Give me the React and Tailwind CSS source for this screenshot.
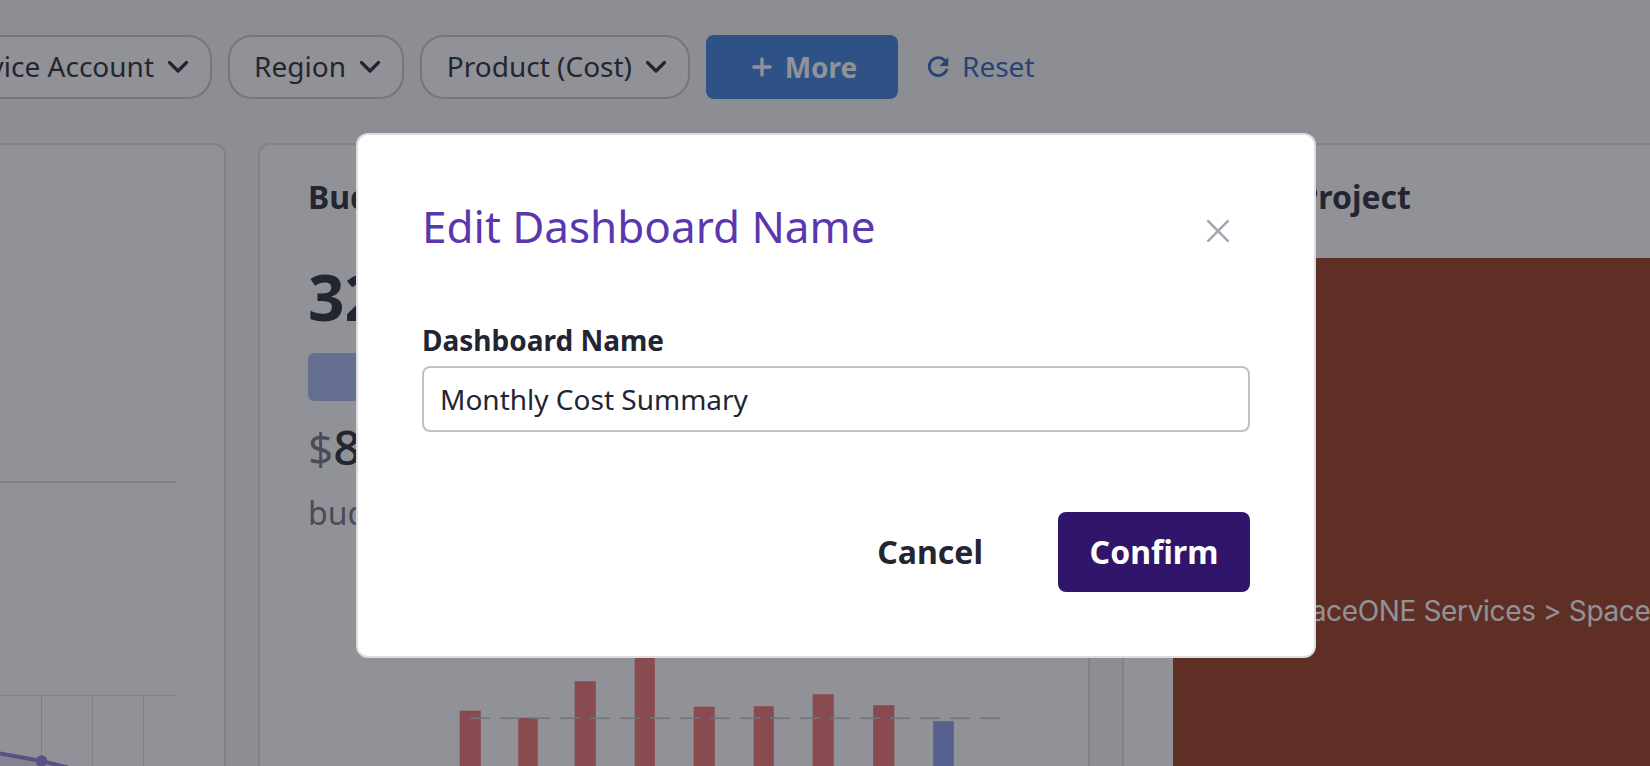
import React from "react";

const bars = [
  { x: 460, y: 711, w: 20.5, c: "#ef7070" },
  { x: 518.5, y: 718, w: 19, c: "#ef7070" },
  { x: 575, y: 681.5, w: 20.5, c: "#ef7070" },
  { x: 635, y: 650, w: 19.5, c: "#ef7070" },
  { x: 694, y: 707, w: 20.5, c: "#ef7070" },
  { x: 754, y: 706.5, w: 19.5, c: "#ef7070" },
  { x: 813, y: 694.5, w: 20.5, c: "#ef7070" },
  { x: 873.5, y: 705.5, w: 20.5, c: "#ef7070" },
  { x: 933.5, y: 721.5, w: 20, c: "#879ae8" },
];

function Chevron() {
  return (
    <svg className="mt-0.5 h-6 w-6 shrink-0" viewBox="0 0 24 24" fill="none" stroke="#232533" strokeWidth="3.2" strokeLinecap="round" strokeLinejoin="round">
      <path d="M3.5 7.5 L12 16 L20.5 7.5" />
    </svg>
  );
}

function Filter({ label, className }) {
  return (
    <div className={"flex h-16 shrink-0 items-center justify-end gap-3 rounded-[24px] border-2 border-[#c5c6cd] bg-white pr-5 pb-0.5 " + className}>
      <span className="whitespace-nowrap">{label}</span>
      <Chevron />
    </div>
  );
}

function SpendChart() {
  return (
    <svg className="mt-[209px] block h-[76px] w-[176px]" viewBox="0 692 176 76">
      <path d="M0 753.5 L41.5 761 L68 768 L0 768 Z" fill="#6b5fc0" fillOpacity="0.2" />
      <path d="M0 695.5 H176 M41.5 695 V768 M92.5 695 V768 M143.5 695 V768" stroke="#dddfe3" fill="none" />
      <path d="M0 753.5 L41.5 761 L68 767.5" stroke="#8b7fd3" strokeWidth="4" fill="none" />
      <circle cx="41.5" cy="761" r="5.8" fill="#8b7fd3" />
    </svg>
  );
}

function BudgetChart() {
  return (
    <svg className="mt-auto block h-[120px] w-[734px]" viewBox="308 646 734 120">
      {bars.map((b) => (
        <rect key={b.x} x={b.x} y={b.y} width={b.w} height={770 - b.y} fill={b.c} stroke={b.c} strokeOpacity="0.6" />
      ))}
      <path d="M470 718.2 H1001" stroke="#bfc1c8" strokeWidth="1.4" strokeDasharray="20 10" />
    </svg>
  );
}

function Dashboard() {
  return (
    <div className="flex h-full flex-col bg-[#f7f7f7]">
      <div className="flex h-[143px] shrink-0 items-start gap-4 pt-[35px] text-[28px] leading-10">
        <Filter label="Service Account" className="-ml-[88px] w-[300px]" />
        <Filter label="Region" className="w-[176px]" />
        <Filter label="Product (Cost)" className="w-[270px]" />
        <button className="flex h-16 w-48 shrink-0 items-center justify-center gap-[13px] rounded-lg bg-[#397edb] pl-[5px] font-bold text-white">
          <svg className="h-5 w-5" viewBox="0 0 20 20" stroke="currentColor" strokeWidth="3.3" strokeLinecap="round">
            <path d="M10 1.9V18.1M1.9 10H18.1" />
          </svg>
          More
        </button>
        <div className="ml-[13px] flex h-16 items-center gap-[13px] pb-0.5 text-[#2b63b9]">
          <svg className="mt-0.5 h-[22px] w-[22px]" viewBox="0 0 22 22">
            <path d="M18.2 4.8 A9 9 0 1 0 19.6 14" fill="none" stroke="currentColor" strokeWidth="2.8" strokeLinecap="round" />
            <path d="M21.3 1.2 V10 H12.4 Z" fill="currentColor" />
          </svg>
          Reset
        </div>
      </div>

      <div className="flex min-h-0 flex-1 gap-8">
        <section className="h-[660px] w-[226px] shrink-0 rounded-tr-xl border-2 border-l-0 border-[#dddfe3] bg-white">
          <div className="mt-[336px] h-0.5 w-44 bg-[#dddfe3]" />
          <SpendChart />
        </section>

        <section className="flex h-[623px] w-[832px] shrink-0 flex-col rounded-t-xl border-2 border-b-0 border-[#dddfe3] bg-white px-12">
          <h2 className="mt-[32px] text-[32px] leading-10 font-bold">Budget Usage</h2>
          <div className="mt-[40px] text-[64px] leading-[80px] font-bold">32.5%</div>
          <div className="mt-[16px] h-12 w-full rounded-md bg-[#a7bbf0]" />
          <div className="mt-[16px] h-[60px] text-[48px] leading-[60px] font-medium">
            <span className="text-[44px] font-normal text-[#6f7185]">$</span>846,230
          </div>
          <div className="mt-[14px] text-[32px] leading-[44px] text-[#6f7185]">budget used</div>
          <BudgetChart />
        </section>

        <section className="h-[660px] w-[700px] shrink-0 rounded-tl-xl border-2 border-[#dddfe3] bg-white pl-[49px]">
          <h2 className="mt-[32px] w-[238px] text-right text-[32px] leading-10 font-bold whitespace-nowrap">Cost by Project</h2>
          <div className="mt-[41px] flex h-[520px] w-[640px] items-start bg-[#9b371b] pt-[335px] pl-[103px]">
            <span className="font-['Inter'] text-[28px] leading-9 tracking-[-0.35px] whitespace-nowrap text-white">SpaceONE Services &gt; SpaceONE</span>
          </div>
        </section>
      </div>
    </div>
  );
}

export default function App() {
  return (
    <main className="relative h-[766px] w-[1650px] overflow-hidden font-['Noto_Sans',sans-serif] text-[#232533]">
      <Dashboard />
      <div className="absolute inset-0 flex items-start bg-[#232530]/50 pt-[133px] pl-[356px]">
        <div role="dialog" className="flex h-[525px] w-[960px] flex-col rounded-xl border-2 border-[#dddde0] bg-white px-16">
          <div className="mt-[61px] flex h-[60px] items-center justify-between pr-5">
            <h1 className="text-[44px] leading-[60px] text-[#5b37ae]">Edit Dashboard Name</h1>
            <svg className="mt-[9px] h-6 w-6" viewBox="0 0 24 24" stroke="#a5a7b0" strokeWidth="2.6" strokeLinecap="round">
              <path d="M2.2 2.2L21.8 21.8M21.8 2.2L2.2 21.8" />
            </svg>
          </div>
          <label className="mt-[64px] text-[28px] leading-10 font-bold">Dashboard Name</label>
          <div className="mt-[6px] flex h-[66px] items-center rounded-lg border-2 border-[#bfc0c5] px-4 text-[28px]">Monthly Cost Summary</div>
          <div className="mt-20 flex h-20 items-center justify-end text-[32px] font-bold">
            <button className="mr-[75px]">Cancel</button>
            <button className="h-20 w-48 rounded-lg bg-[#30156a] text-white">Confirm</button>
          </div>
        </div>
      </div>
    </main>
  );
}
